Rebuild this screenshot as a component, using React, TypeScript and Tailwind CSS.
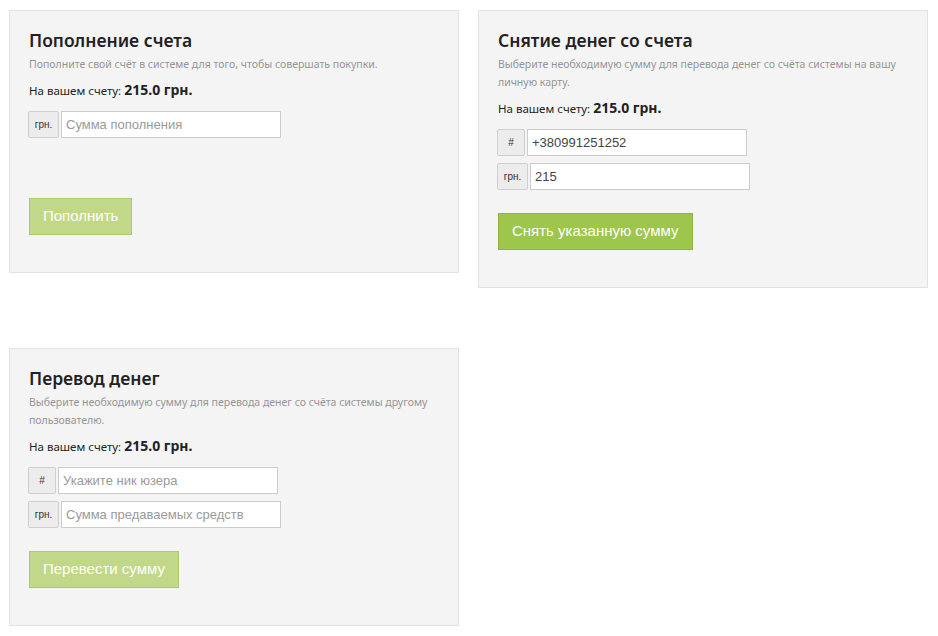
import React from "react";

const font = { fontFamily: '"Noto Sans", "Open Sans", sans-serif' };
const arial = { fontFamily: '"Liberation Sans", Arial, sans-serif' };

function Addon({ label }: { label: string }) {
  return (
    <div
      className={
        "flex h-[27px] shrink-0 items-center justify-center rounded-[2px] border border-[#cfcfcf] bg-[#ececec] text-[10px] text-[#333] " +
        (label === "#" ? "w-[28px]" : "w-[31px]")
      }
      style={arial}
    >
      {label}
    </div>
  );
}

function Field({ label, value, placeholder }: { label: string; value?: string; placeholder?: string }) {
  return (
    <div className="-ml-[1px] flex items-center gap-[2px]">
      <Addon label={label} />
      <input
        readOnly
        defaultValue={value}
        placeholder={placeholder}
        className="h-[27px] w-[220px] border border-[#cccccc] bg-white px-[4px] text-[13px] text-[#444] outline-none placeholder:text-[#9a9a9a]"
        style={arial}
      />
    </div>
  );
}

function Panel({
  title,
  desc,
  children,
  button,
  active,
}: {
  title: string;
  desc: string;
  children: React.ReactNode;
  button: string;
  active?: boolean;
}) {
  return (
    <div className="w-[450px] border border-[#e3e3e3] bg-[#f4f4f4] pl-[19px] pr-[12px] pt-[17px] pb-[37px]" style={font}>
      <div className="text-[17.5px] leading-[24px] font-semibold text-[#222]">{title}</div>
      <div className="mt-[3px] text-[10.5px] leading-[18px] text-[#949494]">{desc}</div>
      <div className="mt-[8px] text-[11.5px] leading-[18px] text-[#222]">
        На вашем счету: <span className="text-[14px] font-bold">215.0 грн.</span>
      </div>
      <div className="mt-[11px] flex flex-col gap-[7px]">{children}</div>
      <button
        className={
          "mt-[23px] h-[37px] border px-[13px] text-[15px] text-white " +
          (active ? "border-[#8cb53e] bg-[#9ec54c]" : "border-[#aecb72] bg-[#c1d889]")
        }
        style={arial}
      >
        {button}
      </button>
    </div>
  );
}

export default function App() {
  return (
    <div className="min-h-[636px] bg-white pl-[9px] pt-[10px]">
      <div className="flex items-start gap-x-[19px]">
        <Panel
          title="Пополнение счета"
          desc="Пополните свой счёт в системе для того, чтобы совершать покупки."
          button="Пополнить"
        >
          <Field label="грн." placeholder="Сумма пополнения" />
          <div className="h-[30px]" />
        </Panel>
        <Panel
          title="Снятие денег со счета"
          desc="Выберите необходимую сумму для перевода денег со счёта системы на вашу личную карту."
          button="Снять указанную сумму"
          active
        >
          <Field label="#" value="+380991251252" />
          <Field label="грн." value="215" />
        </Panel>
      </div>
      <div className="mt-[60px] flex">
        <Panel
          title="Перевод денег"
          desc="Выберите необходимую сумму для перевода денег со счёта системы другому пользователю."
          button="Перевести сумму"
        >
          <Field label="#" placeholder="Укажите ник юзера" />
          <Field label="грн." placeholder="Сумма предаваемых средств" />
        </Panel>
      </div>
    </div>
  );
}
